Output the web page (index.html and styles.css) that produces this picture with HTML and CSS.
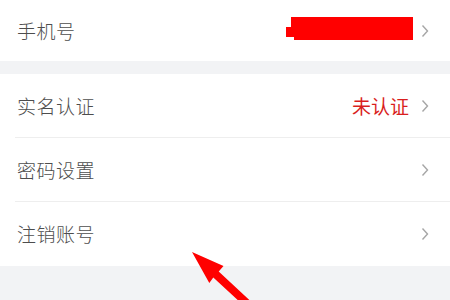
FILE: index.html
```html
<!DOCTYPE html>
<html lang="zh-CN">
<head>
<meta charset="utf-8">
<link rel="stylesheet" href="styles.css">
</head>
<body>
<div class="page">
  <div class="group">
    <div class="row row-first">
      <div class="row-inner">
        <span class="label">手机号</span>
        <span class="value">
          <svg class="redact" width="128" height="24" viewBox="0 0 128 24"><polygon points="5,0 127,0 127,23 8,23 8,20 0,20 0,10 5,10" fill="#ff0000"/></svg>
        </span>
        <svg class="chev" width="8" height="14" viewBox="0 0 8 14"><path d="M1.5 1.5 L6.5 7 L1.5 12.5" fill="none" stroke="#a6a6a6" stroke-width="1.4"/></svg>
      </div>
    </div>
  </div>
  <div class="group">
    <div class="row">
      <div class="row-inner bordered">
        <span class="label">实名认证</span>
        <span class="value red">未认证</span>
        <svg class="chev" width="8" height="14" viewBox="0 0 8 14"><path d="M1.5 1.5 L6.5 7 L1.5 12.5" fill="none" stroke="#a6a6a6" stroke-width="1.4"/></svg>
      </div>
    </div>
    <div class="row">
      <div class="row-inner bordered">
        <span class="label">密码设置</span>
        <span class="value"></span>
        <svg class="chev" width="8" height="14" viewBox="0 0 8 14"><path d="M1.5 1.5 L6.5 7 L1.5 12.5" fill="none" stroke="#a6a6a6" stroke-width="1.4"/></svg>
      </div>
    </div>
    <div class="row">
      <div class="row-inner">
        <span class="label">注销账号</span>
        <span class="value"></span>
        <svg class="chev" width="8" height="14" viewBox="0 0 8 14"><path d="M1.5 1.5 L6.5 7 L1.5 12.5" fill="none" stroke="#a6a6a6" stroke-width="1.4"/></svg>
      </div>
    </div>
  </div>
  <svg class="arrow" width="450" height="300" viewBox="0 0 450 300">
    <polygon points="192,252 223.5,266 218.7,271.6 252.7,303.1 247.3,308.9 213.3,277.4 209.3,283" fill="#ff0000"/>
  </svg>
</div>
</body>
</html>
```
FILE: styles.css
```css
html, body {
  margin: 0;
  padding: 0;
}
body {
  background: #f2f3f5;
  font-family: "Noto Sans CJK SC", "Noto Sans", sans-serif;
  width: 450px;
  height: 300px;
  overflow: hidden;
}
.page {
  position: relative;
  width: 450px;
  height: 300px;
}
.group {
  background: #ffffff;
  margin-bottom: 13px;
}
.row {
  padding-left: 15px;
}
.row-inner {
  display: flex;
  align-items: center;
  height: 63px;
  padding-right: 21px;
  border-bottom: 1px solid transparent;
}
.row-first .row-inner {
  height: 61px;
  border-bottom: 0;
}
.row-inner.bordered {
  border-bottom-color: #eeeeee;
}
.label {
  flex: 1;
  padding-left: 2px;
  font-size: 19px;
  font-weight: 300;
  color: #4d4d4d;
  letter-spacing: 0.5px;
}
.value {
  font-size: 19px;
  font-weight: 300;
  margin-right: 12px;
  display: flex;
  align-items: center;
}
.value.red {
  color: #d91e1e;
  font-weight: 400;
}
.value .redact {
  display: block;
  margin-right: -5px;
  margin-top: -3px;
}
.chev {
  display: block;
}
.arrow {
  position: absolute;
  left: 0;
  top: 0;
  pointer-events: none;
}
```
